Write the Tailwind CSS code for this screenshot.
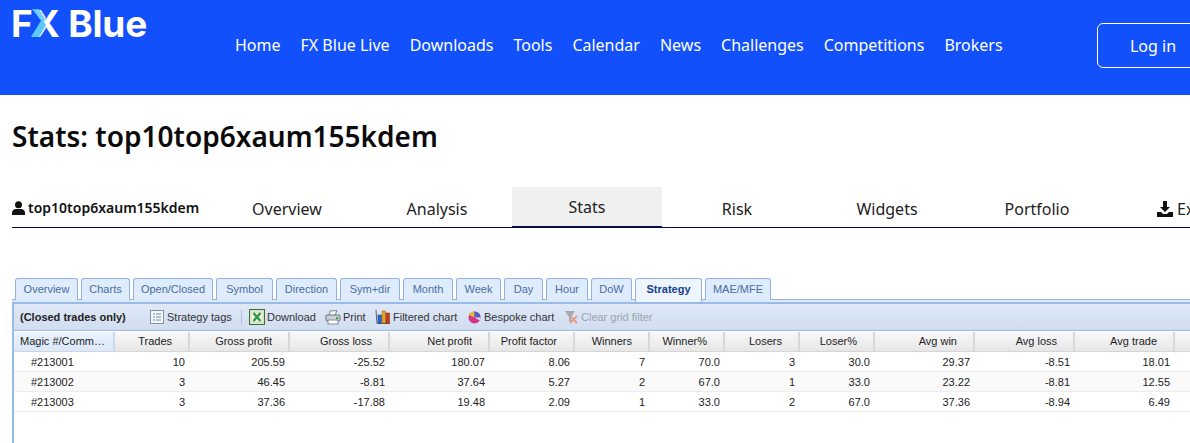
<!DOCTYPE html>
<html>
<head>
<meta charset="utf-8">
<script src="https://cdn.jsdelivr.net/npm/@tailwindcss/browser@4"></script>
</head>
<body class="bg-white overflow-hidden w-[1190px] h-[443px] font-['Noto_Sans',sans-serif]">
<header class="h-[95px] bg-[#1250fb] flex items-start text-white overflow-hidden">
  <div class="relative w-[235px] shrink-0 pl-[11px] pt-[1px] font-['Inter',sans-serif] font-bold text-[37px] leading-[46px] tracking-[-0.2px]">
    <span>FX Blue</span>
    <svg class="absolute left-[30px] top-[9px]" width="24" height="29" viewBox="0 0 24 29"><polygon points="1,28 9,28 16,16 12,10" fill="#5ac8fa"/><polygon points="2,0 9,0 16,11 12,13" fill="#5ac8fa" opacity="0.85"/></svg>
  </div>
  <nav class="flex gap-5 text-base leading-[22px] pt-[34px] w-[862px] shrink-0">
    <a>Home</a><a>FX Blue Live</a><a>Downloads</a><a>Tools</a><a>Calendar</a><a>News</a><a>Challenges</a><a>Competitions</a><a>Brokers</a>
  </nav>
  <a class="mt-[23px] w-[112px] h-[45px] shrink-0 border border-white rounded-md flex items-center justify-center text-base">Log in</a>
</header>

<h1 class="px-3 pt-[23px] text-[28px] leading-[36px] font-semibold text-[#0b0b0b]">Stats: top10top6xaum155kdem</h1>

<div class="ml-3 mt-[33px] h-[41px] border-b border-[#0a0a4a] flex items-stretch text-base text-[#222] overflow-hidden">
  <div class="w-[200px] shrink-0 flex items-center gap-[3px] pt-[2px] text-sm font-semibold text-[#111]">
    <svg width="13" height="14" viewBox="0 0 13 14" fill="#111"><circle cx="6.5" cy="3.8" r="3.5"/><path d="M0 14v-2.2C0 9.4 2 8 4 8h5c2 0 4 1.4 4 3.8V14z"/></svg>
    <span>top10top6xaum155kdem</span>
  </div>
  <a class="w-[150px] shrink-0 flex items-center justify-center pt-[4px]">Overview</a>
  <a class="w-[150px] shrink-0 flex items-center justify-center pt-[4px]">Analysis</a>
  <a class="w-[150px] shrink-0 flex items-center justify-center bg-[#f0f0f0] border-b-2 border-[#0a0a4a] -mb-[1px]">Stats</a>
  <a class="w-[150px] shrink-0 flex items-center justify-center pt-[4px]">Risk</a>
  <a class="w-[150px] shrink-0 flex items-center justify-center pt-[4px]">Widgets</a>
  <a class="w-[150px] shrink-0 flex items-center justify-center pt-[4px]">Portfolio</a>
  <a class="pl-[45px] shrink-0 flex items-center gap-1 whitespace-nowrap pt-[4px]">
    <svg width="16" height="16" viewBox="0 0 16 16" fill="#111"><path d="M6 0h4v6h3l-5 5-5-5h3z"/><path d="M0 11h4l2 2h4l2-2h4v5H0z"/></svg>
    <span>Export</span>
  </a>
</div>

<section class="ml-3 mt-[50px] font-['Liberation_Sans',sans-serif] text-[11px] relative">
  <div class="flex pl-[3px] gap-[3px] h-[22px] text-[#4c6d9b] text-center leading-[21px]">
    <a class="w-[63px] bg-[#deecfd] border border-b-0 border-[#8db2e3] rounded-t-[3px]">Overview</a>
    <a class="w-[49px] bg-[#deecfd] border border-b-0 border-[#8db2e3] rounded-t-[3px]">Charts</a>
    <a class="w-[80px] bg-[#deecfd] border border-b-0 border-[#8db2e3] rounded-t-[3px]">Open/Closed</a>
    <a class="w-[57px] bg-[#deecfd] border border-b-0 border-[#8db2e3] rounded-t-[3px]">Symbol</a>
    <a class="w-[61px] bg-[#deecfd] border border-b-0 border-[#8db2e3] rounded-t-[3px]">Direction</a>
    <a class="w-[60px] bg-[#deecfd] border border-b-0 border-[#8db2e3] rounded-t-[3px]">Sym+dir</a>
    <a class="w-[50px] bg-[#deecfd] border border-b-0 border-[#8db2e3] rounded-t-[3px]">Month</a>
    <a class="w-[45px] bg-[#deecfd] border border-b-0 border-[#8db2e3] rounded-t-[3px]">Week</a>
    <a class="w-[39px] bg-[#deecfd] border border-b-0 border-[#8db2e3] rounded-t-[3px]">Day</a>
    <a class="w-[42px] bg-[#deecfd] border border-b-0 border-[#8db2e3] rounded-t-[3px]">Hour</a>
    <a class="w-[41px] bg-[#deecfd] border border-b-0 border-[#8db2e3] rounded-t-[3px]">DoW</a>
    <a class="w-[67px] h-[24px] relative z-10 bg-[#eef5fd] border border-b-0 border-[#8db2e3] rounded-t-[3px] font-bold text-[#15428b]">Strategy</a>
    <a class="w-[66px] bg-[#deecfd] border border-b-0 border-[#8db2e3] rounded-t-[3px]">MAE/MFE</a>
  </div>
  <div class="h-[5px] border-t border-[#8db2e3] bg-[#dfe8f6] -mt-[1px] flex flex-col justify-end"><div class="h-[2px] bg-[#99bbe8]"></div></div>
  <div class="border-l-2 border-[#99bbe8] h-[140px]">
    <div class="h-[27px] bg-gradient-to-b from-[#dfe8f6] to-[#d0def0] border-b border-[#99bbe8] flex items-center pl-[6px] text-[#333] whitespace-nowrap">
      <b class="w-[130px] shrink-0 text-[#222]">(Closed trades only)</b>
      <span class="flex items-center gap-[3px] w-[91px] shrink-0">
        <svg width="14" height="14" viewBox="0 0 14 14"><rect x=".5" y=".5" width="13" height="13" fill="#f4f7fb" stroke="#7d93ac"/><path d="M3 4h2M6 4h5M3 7h2M6 7h5M3 10h2M6 10h5" stroke="#6f86a3"/></svg>
        <span>Strategy tags</span>
      </span>
      <span class="w-px h-[14px] bg-[#aac4e4] mr-[7px] shrink-0"></span>
      <span class="flex items-center gap-[2px] w-[76px] shrink-0">
        <svg width="16" height="16" viewBox="0 0 16 16"><rect x=".5" y=".5" width="15" height="15" fill="#d9e6c6" stroke="#3b6f35"/><rect x="3" y="4" width="10" height="8" fill="#f4f7ee"/><path d="M4.500 4l7 8M11.500 4l-7 8" stroke="#2b9a48" stroke-width="2.400"/></svg>
        <span>Download</span>
      </span>
      <span class="flex items-center gap-[2px] w-[50px] shrink-0">
        <svg width="16" height="15" viewBox="0 0 16 15"><path d="M5 1l7-.5-2 5H4z" fill="#f3f5f7" stroke="#7f8b98"/><rect x="1" y="5" width="14" height="6" rx="1" fill="#c9d0d8" stroke="#69747f"/><rect x="3" y="10" width="10" height="4" fill="#fff" stroke="#7f8b98"/><rect x="11" y="7" width="2" height="2" fill="#27b33c"/></svg>
        <span>Print</span>
      </span>
      <span class="flex items-center gap-[2px] w-[93px] shrink-0">
        <svg width="16" height="16" viewBox="0 0 16 16"><path d="M1 1l1 13.500h13" fill="none" stroke="#55606e"/><rect x="3" y="6" width="3.500" height="8" fill="#2a62d0" stroke="#1c3f8a" stroke-width=".5"/><rect x="7" y="2" width="3.500" height="12" fill="#e8a21c" stroke="#8a6410" stroke-width=".5"/><rect x="11" y="4" width="3.500" height="10" fill="#d13a20" stroke="#7f2212" stroke-width=".5"/></svg>
        <span>Filtered chart</span>
      </span>
      <span class="flex items-center gap-[3px] w-[96px] shrink-0">
        <svg width="13" height="13" viewBox="0 0 13 13"><circle cx="6.500" cy="6.500" r="6" fill="#d8338a"/><path d="M6.500 6.500L1 4a6 6 0 0 1 5.500-3.500z" fill="#e7c22b"/><path d="M6.500 6.500V.5a6 6 0 0 1 6 6z" fill="#4b62c8"/><path d="M6.500 6.500h6a6 6 0 0 1-.8 3z" fill="#d9dee8"/></svg>
        <span>Bespoke chart</span>
      </span>
      <span class="flex items-center gap-[2px] shrink-0 text-[#9aa3ae]">
        <svg width="15" height="15" viewBox="0 0 15 15"><path d="M1 1h10L7 7v6L5 11V7z" fill="#a6a9ad"/><path d="M6 6l7 7M13 6l-7 7" stroke="#e59a8f" stroke-width="2"/></svg>
        <span>Clear grid filter</span>
      </span>
    </div>
    <div class="h-px"></div>
    <div class="flex h-[20px] leading-[19px] text-[#222] text-right whitespace-nowrap border-b border-[#d5d5d5] bg-gradient-to-b from-[#f9f9f9] to-[#e6e6e6] pl-px">
      <div class="w-[100px] shrink-0 text-left pl-[5px] bg-gradient-to-b from-[#ebf3fd] to-[#d9e8fb] border-r-2 border-[#c5d8f0]">Magic #/Comm…</div>
      <div class="w-[75px] shrink-0 pr-[16px] border-r-2 border-[#d8d8d8]">Trades</div>
      <div class="w-[100px] shrink-0 pr-[16px] border-r-2 border-[#d8d8d8]">Gross profit</div>
      <div class="w-[100px] shrink-0 pr-[16px] border-r-2 border-[#d8d8d8]">Gross loss</div>
      <div class="w-[100px] shrink-0 pr-[16px] border-r-2 border-[#d8d8d8]">Net profit</div>
      <div class="w-[85px] shrink-0 pr-[16px] border-r-2 border-[#d8d8d8]">Profit factor</div>
      <div class="w-[75px] shrink-0 pr-[16px] border-r-2 border-[#d8d8d8]">Winners</div>
      <div class="w-[75px] shrink-0 pr-[16px] border-r-2 border-[#d8d8d8]">Winner%</div>
      <div class="w-[75px] shrink-0 pr-[16px] border-r-2 border-[#d8d8d8]">Losers</div>
      <div class="w-[75px] shrink-0 pr-[16px] border-r-2 border-[#d8d8d8]">Loser%</div>
      <div class="w-[100px] shrink-0 pr-[16px] border-r-2 border-[#d8d8d8]">Avg win</div>
      <div class="w-[100px] shrink-0 pr-[16px] border-r-2 border-[#d8d8d8]">Avg loss</div>
      <div class="w-[100px] shrink-0 pr-[16px] border-r-2 border-[#d8d8d8]">Avg trade</div>
    </div>
    <div class="flex h-[20px] leading-[20px] text-[#222] text-right whitespace-nowrap border-b border-[#ededed] pl-px [&>div]:shrink-0 [&>div]:pr-[5px]">
      <div class="w-[100px] !pr-0 text-left pl-[16px]">#213001</div><div class="w-[75px]">10</div><div class="w-[100px]">205.59</div><div class="w-[100px]">-25.52</div><div class="w-[100px]">180.07</div><div class="w-[85px]">8.06</div><div class="w-[75px]">7</div><div class="w-[75px]">70.0</div><div class="w-[75px]">3</div><div class="w-[75px]">30.0</div><div class="w-[100px]">29.37</div><div class="w-[100px]">-8.51</div><div class="w-[100px]">18.01</div>
    </div>
    <div class="flex h-[20px] leading-[20px] text-[#222] text-right whitespace-nowrap border-b border-[#ededed] bg-[#fafafa] pl-px [&>div]:shrink-0 [&>div]:pr-[5px]">
      <div class="w-[100px] !pr-0 text-left pl-[16px]">#213002</div><div class="w-[75px]">3</div><div class="w-[100px]">46.45</div><div class="w-[100px]">-8.81</div><div class="w-[100px]">37.64</div><div class="w-[85px]">5.27</div><div class="w-[75px]">2</div><div class="w-[75px]">67.0</div><div class="w-[75px]">1</div><div class="w-[75px]">33.0</div><div class="w-[100px]">23.22</div><div class="w-[100px]">-8.81</div><div class="w-[100px]">12.55</div>
    </div>
    <div class="flex h-[20px] leading-[20px] text-[#222] text-right whitespace-nowrap border-b border-[#ededed] pl-px [&>div]:shrink-0 [&>div]:pr-[5px]">
      <div class="w-[100px] !pr-0 text-left pl-[16px]">#213003</div><div class="w-[75px]">3</div><div class="w-[100px]">37.36</div><div class="w-[100px]">-17.88</div><div class="w-[100px]">19.48</div><div class="w-[85px]">2.09</div><div class="w-[75px]">1</div><div class="w-[75px]">33.0</div><div class="w-[75px]">2</div><div class="w-[75px]">67.0</div><div class="w-[100px]">37.36</div><div class="w-[100px]">-8.94</div><div class="w-[100px]">6.49</div>
    </div>
  </div>
</section>
</body>
</html>
